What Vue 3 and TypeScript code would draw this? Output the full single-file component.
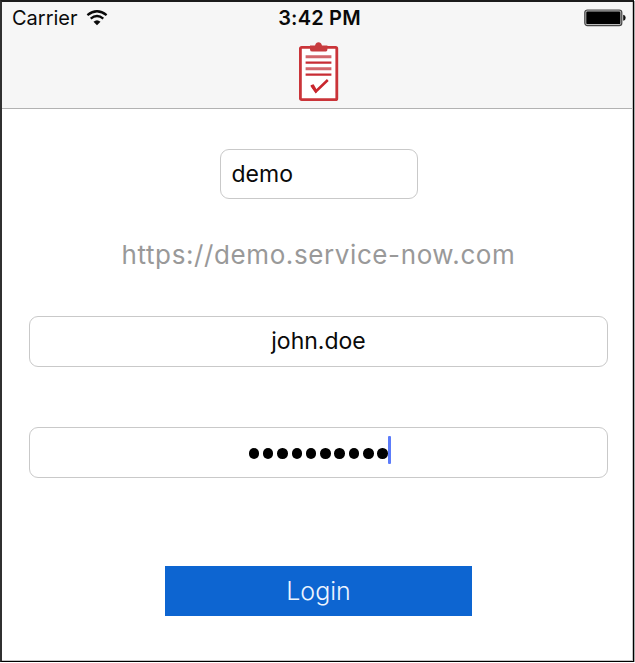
<script setup lang="ts">
import { ref } from 'vue'

const carrier = 'Carrier'
const clock = '3:42 PM'
const instance = ref('demo')
const username = ref('john.doe')
const passwordLength = ref(10)
</script>

<template>
  <main class="screen">
    <header class="top">
      <div class="status">
        <div class="network">
          <span class="carrier">{{ carrier }}</span>
          <svg class="wifi" width="22" height="16" viewBox="0 0 22 16">
            <path d="M1.4 5.1 Q11 -2.6 20.6 5.1" fill="none" stroke="#0a0a0a" stroke-width="2.3" />
            <path d="M4.7 8.7 Q11 3.4 17.3 8.7" fill="none" stroke="#0a0a0a" stroke-width="2.3" />
            <path d="M7.5 11.7 Q11 8.6 14.5 11.7 L11 15.2 Z" fill="#0a0a0a" />
          </svg>
        </div>
        <span class="clock">{{ clock }}</span>
        <svg class="battery" width="43" height="18" viewBox="0 0 43 18">
          <rect x="0.8" y="1" width="37" height="15.6" rx="2.6" fill="#bbb" stroke="#444" stroke-width="1.2" />
          <rect x="2.3" y="2.5" width="34" height="12.6" rx="1.2" fill="#000" />
          <path d="M39.2 5.8 Q41.7 6.3 41.7 8.8 Q41.7 11.3 39.2 11.8 Z" fill="#111" />
        </svg>
      </div>
      <svg class="clipboard" width="40" height="60" viewBox="0 0 40 60">
        <rect x="1.4" y="5.4" width="36.4" height="52.2" rx="1.2" fill="#fff" stroke="#ca3439" stroke-width="2.8" />
        <path d="M11 3.5 H16 Q17 0.3 19.5 0.3 Q22 0.3 23 3.5 H28.4 V7.4 Q28.4 9.6 25.5 9.6 H13.5 Q11 9.6 11 7.4 Z" fill="#c73b3e" />
        <path d="M6.6 14.8 H32.4 M6.6 26.8 H32.4" stroke="#d2666b" stroke-width="3" />
        <path d="M6.6 20.7 H32.4 M6.6 32.7 H32.4" stroke="#c82c34" stroke-width="2.3" />
        <path d="M12.6 43.5 L16.8 49.5 L28.8 38" fill="none" stroke="#c9272e" stroke-width="2.5" />
        <path d="M11.4 43.2 L14.6 42.2 L18.2 48.5 L17 51.3 Z" fill="#c9272e" />
      </svg>
    </header>

    <form class="login" @submit.prevent>
      <input v-model="instance" class="field instance" type="text" aria-label="Instance" />
      <p class="url">https://{{ instance }}.service-now.com</p>
      <input v-model="username" class="field username" type="text" aria-label="Username" />
      <div class="field password">
        <span v-for="n in passwordLength" :key="n" class="dot"></span>
        <span class="caret"></span>
      </div>
      <button class="submit" type="submit">Login</button>
    </form>
  </main>
</template>

<style>
body {
  margin: 0;
  background: #fff;
}
</style>

<style scoped>
.screen {
  box-sizing: border-box;
  width: 634px;
  height: 662px;
  border: 1px solid #000;
  border-left: 2px solid #303030;
  border-top: 2px solid #1c1c1c;
  background: #fff;
  box-shadow: 1px 1px 0 #aaa, inset -1px -1px 0 #c4c4c4;
  font-family: Inter, "Liberation Sans", sans-serif;
  color: #0a0a0a;
}
.top {
  box-sizing: border-box;
  width: 630px;
  height: 107px;
  border-bottom: 1px solid #b2b2b2;
  background: #f6f6f6;
}
.status {
  display: grid;
  grid-template-columns: 1fr auto 1fr;
  align-items: center;
  height: 32px;
  padding: 0 5px 0 10px;
}
.network {
  display: flex;
  align-items: center;
  gap: 8px;
}
.carrier {
  font-size: 20px;
  line-height: 32px;
}
.clock {
  font-size: 20px;
  line-height: 32px;
  font-weight: 600;
  letter-spacing: 0.2px;
}
.battery {
  justify-self: end;
}
.clipboard {
  display: block;
  margin: 8px auto 0 297px;
}
.login {
  display: flex;
  flex-direction: column;
  align-items: center;
  width: 633px;
  padding-top: 40px;
}
.field {
  box-sizing: border-box;
  height: 51px;
  margin: 0;
  border: 1px solid #c9c9c9;
  border-radius: 9px;
  background: #fff;
  outline: none;
  font-family: inherit;
  font-size: 23px;
  color: #0a0a0a;
}
.instance {
  width: 198px;
  height: 50px;
  padding: 0 11px 1px;
}
.url {
  height: 34px;
  margin: 39px 0 44px;
  font-size: 26px;
  line-height: 34px;
  letter-spacing: 0.6px;
  color: #999;
  white-space: nowrap;
}
.username {
  width: 579px;
  padding: 0 0 2px;
  text-align: center;
}
.password {
  display: flex;
  align-items: center;
  justify-content: center;
  gap: 3.8px;
  width: 579px;
  margin-top: 60px;
  padding-left: 3px;
}
.dot {
  width: 10.5px;
  height: 10.5px;
  border-radius: 50%;
  background: #000;
  transform: translateY(1px);
}
.caret {
  width: 3px;
  height: 28px;
  margin: 0 0 5px -3.3px;
  border-radius: 1px;
  background: #5c7cfa;
}
.submit {
  width: 307px;
  height: 50px;
  margin-top: 88px;
  padding: 0;
  border: 0;
  background: #0d65d1;
  color: #edf5ff;
  font-family: inherit;
  font-size: 25px;
  font-weight: 300;
}
</style>
